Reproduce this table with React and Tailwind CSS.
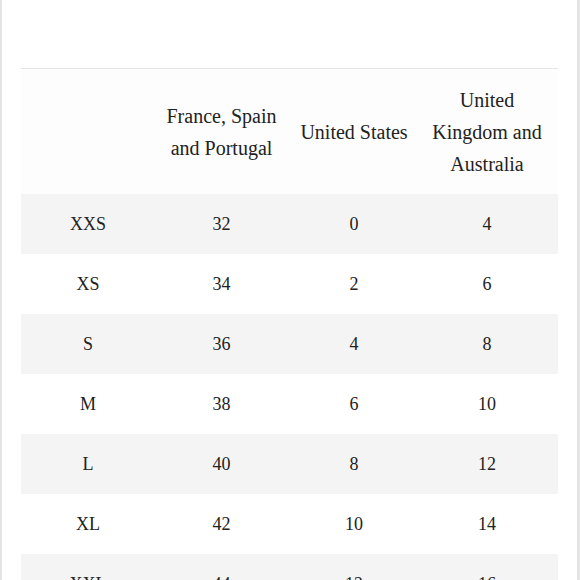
export default function App() {
  const rows = [
    ["XXS", "32", "0", "4"],
    ["XS", "34", "2", "6"],
    ["S", "36", "4", "8"],
    ["M", "38", "6", "10"],
    ["L", "40", "8", "12"],
    ["XL", "42", "10", "14"],
    ["XXL", "44", "12", "16"],
  ];
  return (
    <div
      className="w-[580px] h-[580px] overflow-hidden bg-white border-l-2 border-r-[3px] border-[#e4e4e4] pl-[19px] pr-[19px] pt-[68px] text-[#222]"
      style={{ fontFamily: '"Liberation Serif", "Times New Roman", serif' }}
    >
      <div className="w-[537px] border-t border-[#e6e6e6]">
        <div className="grid grid-cols-[134px_133px_132px_134px] h-[125px] items-center bg-[#fdfdfd] text-[20px] leading-[32px] text-center">
          <div></div>
          <div>France, Spain<br />and Portugal</div>
          <div>United States</div>
          <div>United<br />Kingdom and<br />Australia</div>
        </div>
        {rows.map((r, i) => (
          <div
            key={r[0]}
            className={`grid grid-cols-[134px_133px_132px_134px] h-[60px] items-center text-center text-[18px] ${i % 2 === 0 ? "bg-[#f4f4f4]" : "bg-white"}`}
          >
            {r.map((c, j) => (
              <div key={j}>{c}</div>
            ))}
          </div>
        ))}
      </div>
    </div>
  );
}
